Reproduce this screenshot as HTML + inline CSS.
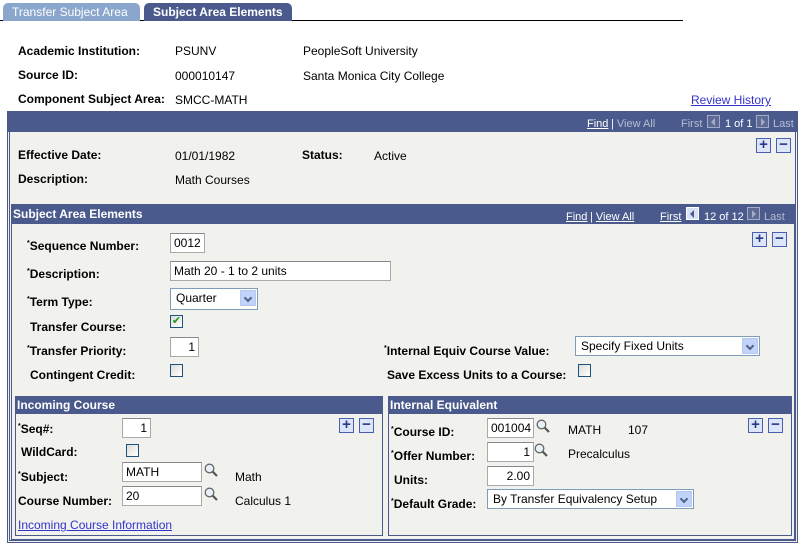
<!DOCTYPE html>
<html><head><style>
*{margin:0;padding:0;box-sizing:border-box}
body{width:802px;height:546px;background:#fff;font-family:"Liberation Sans",Arial,sans-serif;font-size:12px;color:#000;position:relative;overflow:hidden}
.a{position:absolute;white-space:nowrap}
.b{font-weight:bold}
.hdr{position:absolute;background:#4a5a8c;color:#fff}
.w{color:#fff}
.g{color:#b6bdd2}
.u{text-decoration:underline}
.inp{position:absolute;background:#fff;border:1px solid #a9a9a9;border-top-color:#888;height:20px;padding:1px 3px;font-size:12px;line-height:16px}
.r{text-align:right}
.sel{position:absolute;background:#fff;border:1px solid #7f9db9;height:20px;padding:1px 5px;line-height:16px}
.sel i{position:absolute;right:1px;top:1px;width:16px;height:16px;background:#c1d3fb;border:1px solid #b8c8ec}
.sel i:after{content:"";position:absolute;left:4px;top:4px;width:4px;height:4px;border-right:2px solid #4d6185;border-bottom:2px solid #4d6185;transform:rotate(45deg)}
.cb{position:absolute;width:13px;height:13px;border:1px solid #1c5180;background:linear-gradient(135deg,#dcdcd7,#fff)}
.pm{position:absolute;width:15px;height:15px;border:1px solid #4a5fb0;background:#dde6f8;color:#2a3a8c;font-weight:bold;font-size:15px;line-height:12px;text-align:center}
.mg{position:absolute;width:14px;height:14px}
.nb{position:absolute;width:13px;height:13px;border:1px solid #a4abc4;background:#5d6a96}
.tl:after,.tr:after{content:"";position:absolute;top:2px;border-top:4px solid transparent;border-bottom:4px solid transparent}
.tl:after{left:3px;border-right:4px solid #a4abc4}
.tr:after{left:4px;border-left:4px solid #a4abc4}
.act{background:#d8e2f6;border-color:#fff}
.act:after{border-right-color:#4a5a8c}
a{color:#3333cc}
</style></head><body>
<div class="a" style="left:0;top:20px;width:683px;height:1px;background:#000"></div>
<div class="a" style="left:3px;top:3px;width:137px;height:18px;background:#8aa6cd;border-radius:5px 5px 0 0;color:#fff;padding:2px 0 0 9px;font-size:12px">Transfer Subject Area</div>
<div class="a b" style="left:144px;top:3px;width:148px;height:18px;background:#4a5a8c;border-radius:5px 5px 0 0;color:#fff;padding:2px 0 0 9px;font-size:12px">Subject Area Elements</div>

<div class="a b" style="left:18px;top:44px">Academic Institution:</div>
<div class="a" style="left:175px;top:44px">PSUNV</div>
<div class="a" style="left:303px;top:44px">PeopleSoft University</div>
<div class="a b" style="left:18px;top:68px">Source ID:</div>
<div class="a" style="left:175px;top:69px">000010147</div>
<div class="a" style="left:303px;top:69px">Santa Monica City College</div>
<div class="a b" style="left:18px;top:92px">Component Subject Area:</div>
<div class="a" style="left:175px;top:93px">SMCC-MATH</div>
<div class="a" style="left:691px;top:93px"><a class="u">Review History</a></div>

<div class="a" style="left:7px;top:111px;width:791px;height:432px;border:1px solid #4a5a8c;background:#f1f2ee"></div>
<div class="a" style="left:9px;top:113px;width:787px;height:428px;border:1px solid #4a5a8c"></div>
<div class="hdr" style="left:7px;top:111px;width:791px;height:21px"></div>
<div class="a w u" style="left:587px;top:118px;font-size:11px">Find</div>
<div class="a g" style="left:611px;top:118px;font-size:11px"><span class="w">|</span> View All</div>
<div class="a g" style="left:681px;top:118px;font-size:11px">First</div>
<div class="nb tl" style="left:707px;top:115px"></div>
<div class="a w" style="left:725px;top:118px;font-size:11px">1 of 1</div>
<div class="nb tr" style="left:756px;top:115px"></div>
<div class="a g" style="left:773px;top:118px;font-size:11px">Last</div>
<div class="pm" style="left:756px;top:138px">+</div><div class="pm" style="left:776px;top:138px">−</div>

<div class="a b" style="left:18px;top:148px">Effective Date:</div>
<div class="a" style="left:175px;top:149px">01/01/1982</div>
<div class="a b" style="left:302px;top:148px">Status:</div>
<div class="a" style="left:374px;top:149px">Active</div>
<div class="a b" style="left:18px;top:172px">Description:</div>
<div class="a" style="left:175px;top:173px">Math Courses</div>

<div class="a" style="left:11px;top:204px;width:784px;height:336px;border:1px solid #4a5a8c"></div>
<div class="hdr b" style="left:11px;top:204px;width:784px;height:20px;padding:3px 0 0 2px">Subject Area Elements</div>
<div class="a w u" style="left:566px;top:211px;font-size:11px">Find</div>
<div class="a w" style="left:590px;top:211px;font-size:11px">| <span class="u">View All</span></div>
<div class="a w u" style="left:660px;top:211px;font-size:11px">First</div>
<div class="nb tl act" style="left:686px;top:207px"></div>
<div class="a w" style="left:704px;top:211px;font-size:11px">12 of 12</div>
<div class="nb tr" style="left:747px;top:207px"></div>
<div class="a g" style="left:764px;top:211px;font-size:11px">Last</div>
<div class="pm" style="left:752px;top:232px">+</div><div class="pm" style="left:772px;top:232px">−</div>

<div class="a b" style="left:27px;top:239px"><sup style="font-size:7px">*</sup>Sequence Number:</div>
<div class="inp" style="left:170px;top:233px;width:35px">0012</div>
<div class="a b" style="left:27px;top:267px"><sup style="font-size:7px">*</sup>Description:</div>
<div class="inp" style="left:170px;top:261px;width:221px">Math 20 - 1 to 2 units</div>
<div class="a b" style="left:27px;top:295px"><sup style="font-size:7px">*</sup>Term Type:</div>
<div class="sel" style="left:170px;top:288px;width:88px;height:22px">Quarter<i></i></div>
<div class="a b" style="left:30px;top:320px">Transfer Course:</div>
<div class="cb" style="left:170px;top:315px;color:#1a9a1a;font-size:11px;line-height:11px;text-align:center">✔</div>
<div class="a b" style="left:27px;top:344px"><sup style="font-size:7px">*</sup>Transfer Priority:</div>
<div class="inp r" style="left:170px;top:337px;width:29px">1</div>
<div class="a b" style="left:30px;top:368px">Contingent Credit:</div>
<div class="cb" style="left:170px;top:364px"></div>
<div class="a b" style="left:384px;top:344px"><sup style="font-size:7px">*</sup>Internal Equiv Course Value:</div>
<div class="sel" style="left:575px;top:336px;width:185px">Specify Fixed Units<i></i></div>
<div class="a b" style="left:387px;top:368px">Save Excess Units to a Course:</div>
<div class="cb" style="left:578px;top:364px"></div>

<div class="a" style="left:15px;top:396px;width:368px;height:140px;border:1px solid #4a5a8c"></div>
<div class="hdr b" style="left:15px;top:396px;width:368px;height:18px;padding:2px 0 0 2px">Incoming Course</div>
<div class="a b" style="left:18px;top:422px"><sup style="font-size:7px">*</sup>Seq#:</div>
<div class="inp r" style="left:122px;top:418px;width:29px">1</div>
<div class="pm" style="left:339px;top:418px">+</div><div class="pm" style="left:359px;top:418px">−</div>
<div class="a b" style="left:21px;top:445px">WildCard:</div>
<div class="cb" style="left:126px;top:444px"></div>
<div class="a b" style="left:18px;top:470px"><sup style="font-size:7px">*</sup>Subject:</div>
<div class="inp" style="left:122px;top:462px;width:80px">MATH</div>
<svg class="mg" style="left:204px;top:463px" viewBox="0 0 14 14"><circle cx="5.5" cy="5.5" r="4.3" fill="#e8f0f8" stroke="#666" stroke-width="1.3"/><path d="M8.5 8.5L13 13" stroke="#555" stroke-width="2.2"/></svg>
<div class="a" style="left:235px;top:470px">Math</div>
<div class="a b" style="left:18px;top:494px">Course Number:</div>
<div class="inp" style="left:122px;top:486px;width:80px">20</div>
<svg class="mg" style="left:204px;top:487px" viewBox="0 0 14 14"><circle cx="5.5" cy="5.5" r="4.3" fill="#e8f0f8" stroke="#666" stroke-width="1.3"/><path d="M8.5 8.5L13 13" stroke="#555" stroke-width="2.2"/></svg>
<div class="a" style="left:235px;top:494px">Calculus 1</div>
<div class="a" style="left:18px;top:518px"><a class="u">Incoming Course Information</a></div>

<div class="a" style="left:388px;top:396px;width:404px;height:140px;border:1px solid #4a5a8c"></div>
<div class="hdr b" style="left:388px;top:396px;width:404px;height:18px;padding:2px 0 0 2px">Internal Equivalent</div>
<div class="a b" style="left:391px;top:425px"><sup style="font-size:7px">*</sup>Course ID:</div>
<div class="inp" style="left:487px;top:418px;width:47px">001004</div>
<svg class="mg" style="left:536px;top:419px" viewBox="0 0 14 14"><circle cx="5.5" cy="5.5" r="4.3" fill="#e8f0f8" stroke="#666" stroke-width="1.3"/><path d="M8.5 8.5L13 13" stroke="#555" stroke-width="2.2"/></svg>
<div class="a" style="left:568px;top:423px">MATH</div>
<div class="a" style="left:628px;top:423px">107</div>
<div class="pm" style="left:748px;top:418px">+</div><div class="pm" style="left:768px;top:418px">−</div>
<div class="a b" style="left:391px;top:449px"><sup style="font-size:7px">*</sup>Offer Number:</div>
<div class="inp r" style="left:487px;top:442px;width:47px">1</div>
<svg class="mg" style="left:534px;top:443px" viewBox="0 0 14 14"><circle cx="5.5" cy="5.5" r="4.3" fill="#e8f0f8" stroke="#666" stroke-width="1.3"/><path d="M8.5 8.5L13 13" stroke="#555" stroke-width="2.2"/></svg>
<div class="a" style="left:568px;top:447px">Precalculus</div>
<div class="a b" style="left:394px;top:473px">Units:</div>
<div class="inp r" style="left:487px;top:466px;width:47px">2.00</div>
<div class="a b" style="left:391px;top:497px"><sup style="font-size:7px">*</sup>Default Grade:</div>
<div class="sel" style="left:487px;top:489px;width:207px">By Transfer Equivalency Setup<i></i></div>
</body></html>
